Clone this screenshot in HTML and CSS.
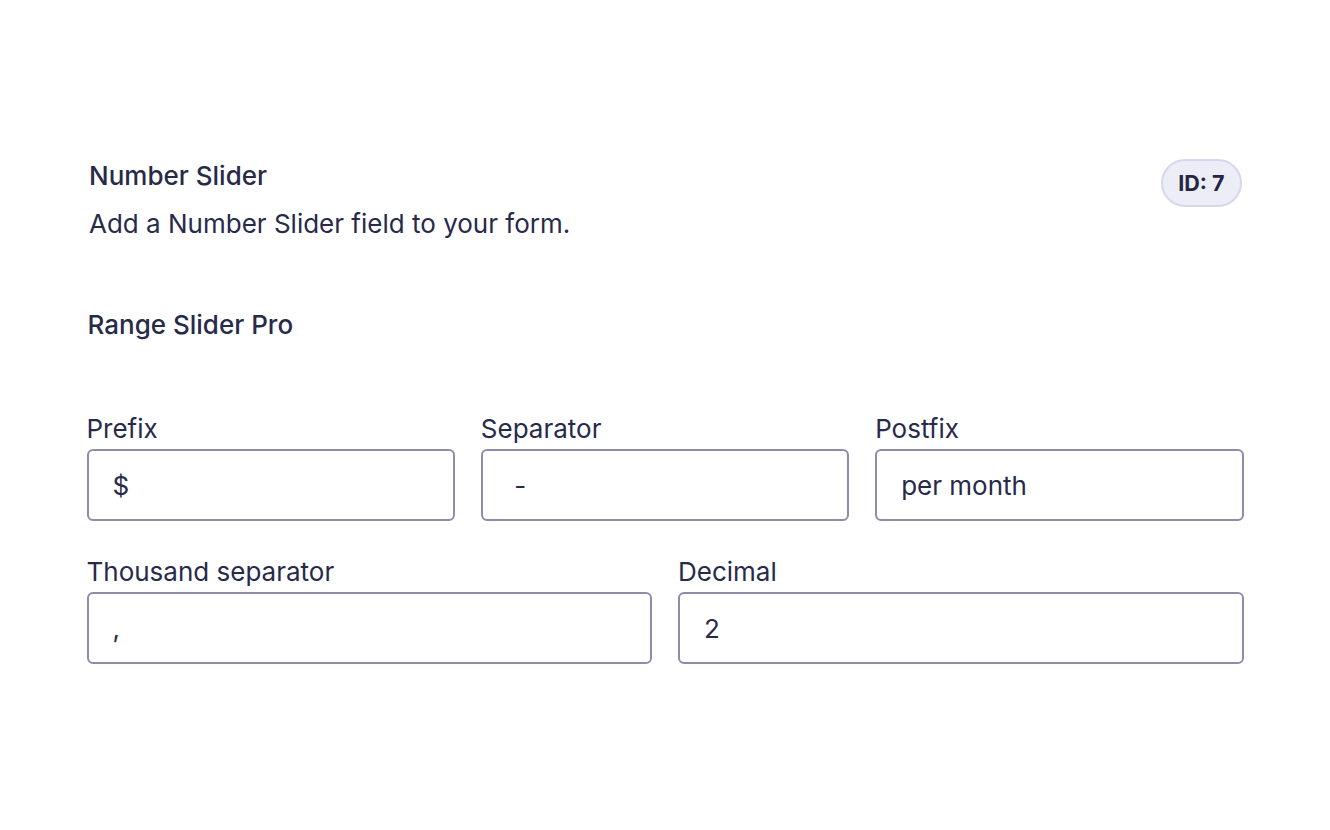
FILE: index.html
```html
<!DOCTYPE html>
<html lang="en">
<head>
<meta charset="utf-8">
<title>Number Slider</title>
<link rel="stylesheet" href="styles.css">
</head>
<body>
<div class="page">
  <header class="header">
    <div class="header-text">
      <h1 class="title">Number Slider</h1>
      <p class="desc">Add a Number Slider field to your form.</p>
    </div>
    <span class="badge">ID: 7</span>
  </header>
  <h2 class="section">Range Slider Pro</h2>
  <div class="row row-3">
    <label class="field">
      <span class="label">Prefix</span>
      <input class="input" type="text" value="$">
    </label>
    <label class="field">
      <span class="label">Separator</span>
      <input class="input" type="text" value=" -">
    </label>
    <label class="field">
      <span class="label">Postfix</span>
      <input class="input" type="text" value="per month">
    </label>
  </div>
  <div class="row row-2">
    <label class="field">
      <span class="label">Thousand separator</span>
      <input class="input" type="text" value=",">
    </label>
    <label class="field">
      <span class="label">Decimal</span>
      <input class="input" type="text" value="2">
    </label>
  </div>
</div>
</body>
</html>
```

FILE: styles.css
```css
* { box-sizing: border-box; }
html, body { margin: 0; padding: 0; background: #ffffff; }
body {
  font-family: Inter, "Noto Sans", sans-serif;
  color: #282a4a;
}
.page {
  width: 1157px;
  margin-left: 86.5px;
  padding-top: 158px;
}
.header {
  display: flex;
  justify-content: space-between;
  align-items: flex-start;
  padding-left: 2.5px;
  padding-right: 2px;
}
.title {
  margin: 0;
  font-size: 26px;
  line-height: 36px;
  font-weight: 500;
}
.desc {
  margin: 14px 0 0;
  font-size: 26px;
  line-height: 32px;
  font-weight: 400;
}
.badge {
  margin-top: 1px;
  display: inline-flex;
  align-items: center;
  height: 48px;
  padding: 0 15px;
  border: 2px solid #d7d7ec;
  border-radius: 24px;
  background: #ededf8;
  font-size: 21.5px;
  font-weight: 700;
  color: #242640;
}
.section {
  margin: 69px 0 0;
  padding-left: 1px;
  font-size: 26px;
  line-height: 32px;
  font-weight: 500;
}
.row {
  display: grid;
  column-gap: 26px;
}
.row-3 { grid-template-columns: repeat(3, 1fr); margin-top: 72px; }
.row-2 { grid-template-columns: repeat(2, 1fr); margin-top: 35px; }
.field {
  display: flex;
  flex-direction: column;
}
.label {
  font-size: 26px;
  line-height: 32px;
  margin-bottom: 4px;
}
.input {
  width: 100%;
  height: 72px;
  border: 2px solid #8e8cab;
  border-radius: 6px;
  padding: 0 24px;
  font-family: Inter, "Noto Sans", sans-serif;
  font-size: 26px;
  color: #282a4a;
  background: #fff;
  outline: none;
}
```
